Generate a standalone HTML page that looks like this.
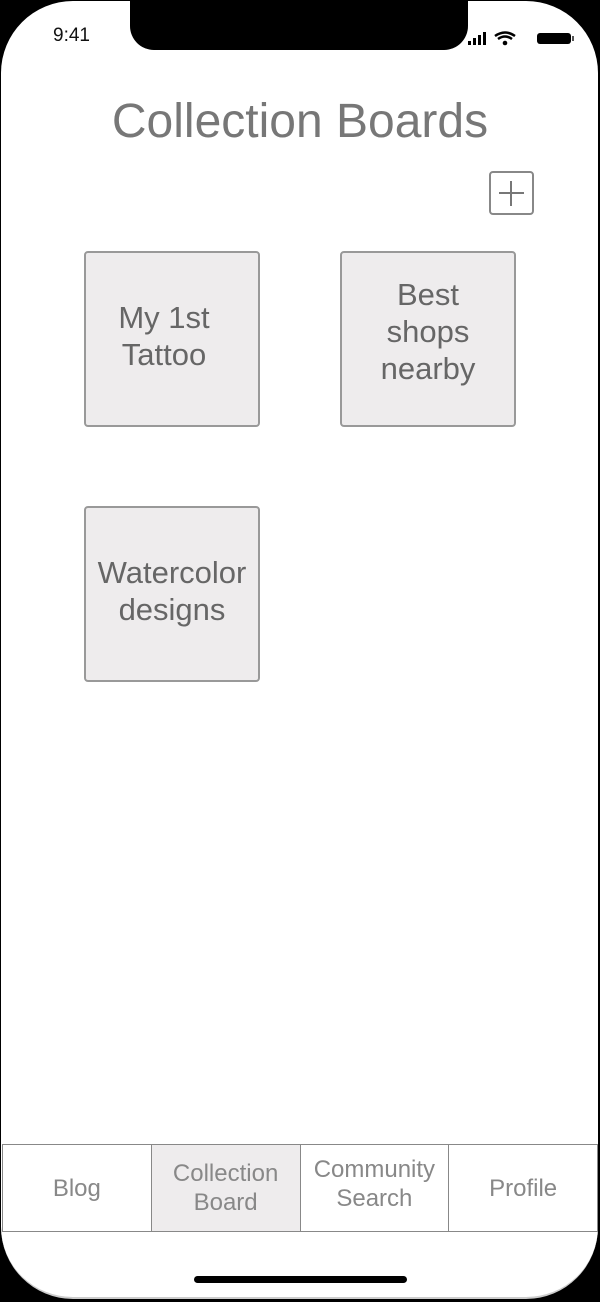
<!DOCTYPE html>
<html><head><style>
*{margin:0;padding:0;box-sizing:border-box}
body{width:600px;height:1302px;background:#000;font-family:"Liberation Sans",sans-serif;position:relative;overflow:hidden}
.screen{position:absolute;left:1px;top:1px;width:597px;height:1298px;background:#fff;border-radius:72px;border-bottom:2px solid #ccc}
.notch{position:absolute;left:130px;top:0;width:338px;height:50px;background:#000;border-radius:0 0 24px 24px}
.time{position:absolute;left:53px;top:25px;font-size:19px;color:#111}
.title{position:absolute;left:0;width:600px;top:94px;text-align:center;font-size:48px;color:#777}
.plus{position:absolute;left:489px;top:171px;width:45px;height:44px;border:2px solid #888;border-radius:4px}
.plus:before{content:"";position:absolute;left:8px;top:19px;width:25px;height:2px;background:#777}
.plus:after{content:"";position:absolute;left:19px;top:8px;width:2px;height:25px;background:#777}
.card{position:absolute;width:176px;height:176px;background:#eeeced;border:2px solid #999;border-radius:4px;display:flex;align-items:center;justify-content:center;text-align:center;font-size:31px;line-height:37px;color:#666}
.tabs{position:absolute;left:2px;top:1144px;width:596px;height:88px;border:1.5px solid #888;display:flex}
.tab{flex:1;border-right:1.5px solid #888;display:flex;align-items:center;justify-content:center;text-align:center;font-size:24px;line-height:29px;color:#888}
.tab:last-child{border-right:none}
.home{position:absolute;left:194px;top:1276px;width:213px;height:7px;background:#000;border-radius:4px}
</style></head><body>
<div class="screen"></div>
<div class="notch"></div>
<div class="time">9:41</div>
<svg style="position:absolute;left:468px;top:30px" width="110" height="20">
<rect x="0" y="11" width="3" height="4" fill="#000"/><rect x="5" y="8" width="3" height="7" fill="#000"/><rect x="10" y="5" width="3" height="10" fill="#000"/><rect x="15" y="2" width="3" height="13" fill="#000"/>
<path d="M27 6 Q37 -1 47 6" stroke="#000" stroke-width="2.5" fill="none"/><path d="M30 9 Q37 4 44 9" stroke="#000" stroke-width="2.5" fill="none"/><circle cx="37" cy="13" r="2.3" fill="#000"/>
<rect x="69" y="3" width="34" height="11" rx="3" fill="#000"/><rect x="104" y="6" width="2" height="5" fill="#555"/>
</svg>
<div class="title">Collection Boards</div>
<div class="plus"></div>
<div class="card" style="left:84px;top:251px;padding-right:16px;padding-bottom:6px">My 1st<br>Tattoo</div>
<div class="card" style="left:340px;top:251px;padding-bottom:16px">Best<br>shops<br>nearby</div>
<div class="card" style="left:84px;top:506px;padding-bottom:6px">Watercolor<br>designs</div>
<div class="tabs">
<div class="tab">Blog</div>
<div class="tab" style="background:#eeeced">Collection<br>Board</div>
<div class="tab" style="padding-bottom:8px">Community<br>Search</div>
<div class="tab">Profile</div>
</div>
<div class="home"></div>
</body></html>
